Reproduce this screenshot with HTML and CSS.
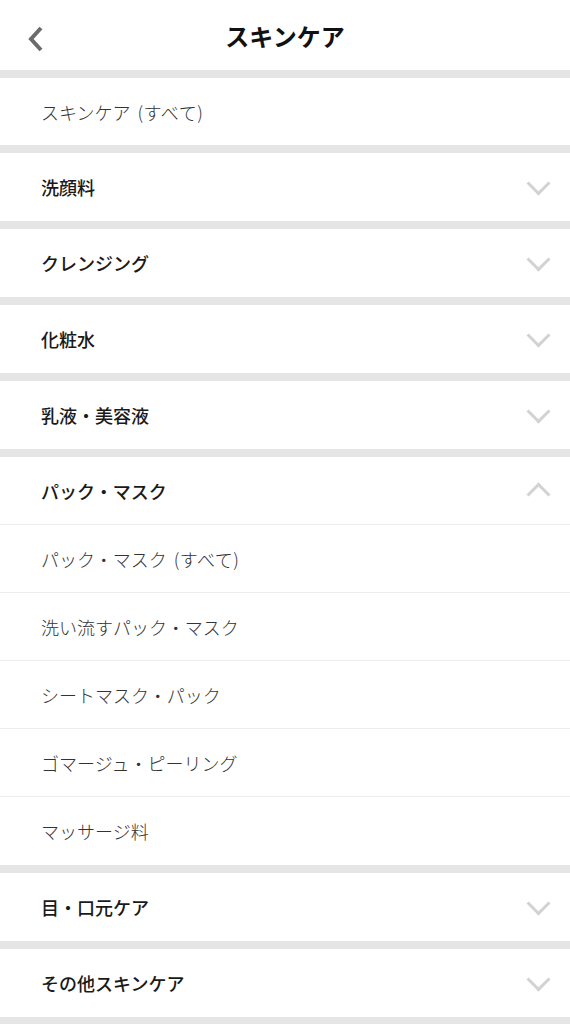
FILE: index.html
```html
<!DOCTYPE html>
<html>
    <head>
        <title>スキンケア</title>
        <meta charset="UTF-8">
        <link rel="stylesheet" href="styles.css">
    </head>
    <body>
        <header class="topbar">
            <a class="back" href="#">
                <svg width="18" height="26" viewBox="0 0 18 26"><path d="M14 2 L4 13 L14 24" fill="none" stroke="#6b6b6b" stroke-width="4"/></svg>
            </a>
            <h1>スキンケア</h1>
        </header>
        <ul class="groups">
            <li class="group">
                <a class="item first" href="#"><span>スキンケア <span class="all">(すべて)</span></span></a>
            </li>
            <li class="group">
                <a class="head" href="#">洗顔料<span class="chev down"></span></a>
            </li>
            <li class="group">
                <a class="head" href="#">クレンジング<span class="chev down"></span></a>
            </li>
            <li class="group">
                <a class="head" href="#">化粧水<span class="chev down"></span></a>
            </li>
            <li class="group">
                <a class="head" href="#">乳液・美容液<span class="chev down"></span></a>
            </li>
            <li class="group open">
                <a class="head" href="#">パック・マスク<span class="chev up"></span></a>
                <a class="item" href="#"><span>パック・マスク <span class="all">(すべて)</span></span></a>
                <a class="item" href="#">洗い流すパック・マスク</a>
                <a class="item" href="#">シートマスク・パック</a>
                <a class="item" href="#">ゴマージュ・ピーリング</a>
                <a class="item" href="#">マッサージ料</a>
            </li>
            <li class="group">
                <a class="head" href="#">目・口元ケア<span class="chev down"></span></a>
            </li>
            <li class="group">
                <a class="head" href="#">その他スキンケア<span class="chev down"></span></a>
            </li>
        </ul>
    </body>
</html>
```

FILE: styles.css
```css
body {
    margin: 0;
    background-color: #e5e5e5;
    font-family: "Noto Sans CJK JP", "Noto Sans", sans-serif;
}
a {
    text-decoration: none;
}
.topbar {
    height: 70px;
    background-color: white;
    display: flex;
    align-items: center;
    justify-content: center;
    position: relative;
}
.topbar h1 {
    margin: 0;
    font-size: 24px;
    font-weight: bold;
    color: #111;
}
.back {
    position: absolute;
    left: 27px;
    top: 26px;
    display: flex;
}
.groups {
    list-style: none;
    margin: 8px 0 0 0;
    padding: 0;
    display: flex;
    flex-direction: column;
    gap: 8px;
}
.group {
    background-color: white;
    display: flex;
    flex-direction: column;
}
.head, .item {
    height: 68px;
    padding: 0 20px 0 41px;
    display: flex;
    align-items: center;
    justify-content: space-between;
    font-size: 18px;
}
.item.first {
    height: 67px;
}
.head {
    color: #1a1a1a;
    font-weight: 500;
}
.item {
    color: #333;
    font-weight: 300;
}
.all {
    margin-left: 3px;
    letter-spacing: 0.5px;
}
.open .head, .open .item {
    height: 67px;
    border-bottom: 1px solid #ececec;
}
.open .item:last-child {
    border-bottom: none;
    height: 68px;
}
.chev {
    width: 14px;
    height: 14px;
    border-right: 3px solid #d2d2d2;
    border-bottom: 3px solid #d2d2d2;
    margin-right: 3px;
}
.chev.down {
    transform: translateY(-4px) rotate(45deg);
}
.chev.up {
    transform: translateY(4px) rotate(-135deg);
}
```
